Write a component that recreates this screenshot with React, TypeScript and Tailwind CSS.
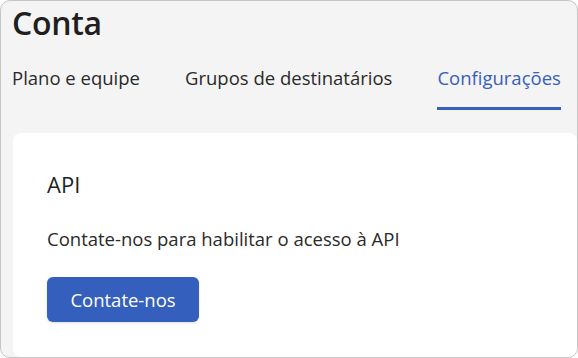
export default function App() {
  const tabs = ["Plano e equipe", "Grupos de destinatários", "Configurações"];
  const active = "Configurações";

  return (
    <div
      className="w-[578px] h-[358px] overflow-hidden rounded-[10px] border border-[#c6c6c6] bg-[#f4f4f4] flex flex-col text-[#1f1f1f]"
      style={{ fontFamily: '"Open Sans", "Noto Sans", sans-serif' }}
    >
      {/* Header */}
      <h1 className="pl-[11px] pt-[1px] text-[32px] leading-[42px] font-semibold tracking-[-0.3px]">
        Conta
      </h1>

      {/* Tabs */}
      <nav className="flex gap-[45px] pl-[11px] mt-[21px]">
        {tabs.map((tab) => (
          <button
            key={tab}
            type="button"
            className={
              tab === active
                ? "pb-[16px] text-[18.5px] leading-[26px] text-[#3560bf] border-b-[3px] border-[#3560bf]"
                : "pb-[16px] text-[18.5px] leading-[26px] text-[#2a2a2a] border-b-[3px] border-transparent"
            }
          >
            {tab}
          </button>
        ))}
      </nav>

      {/* Settings card */}
      <div className="ml-[12px] mt-[23px] flex-1 bg-white rounded-[8px] pl-[34px] pt-[37px]">
        <h2 className="text-[22px] leading-[28px] font-medium">API</h2>
        <p className="mt-[28px] text-[18.5px] leading-[26px] text-[#2a2a2a]">
          Contate-nos para habilitar o acesso à API
        </p>
        <button
          type="button"
          className="mt-[25px] w-[152px] h-[45px] rounded-[6px] bg-[#345fbd] text-white text-[18.5px] shadow-sm"
        >
          Contate-nos
        </button>
      </div>
    </div>
  );
}
